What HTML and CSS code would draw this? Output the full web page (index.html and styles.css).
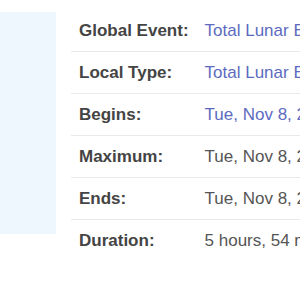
FILE: index.html
```html
<!DOCTYPE html>
<html lang="en">
<head>
  <meta charset="UTF-8">
  <title>Eclipse Details</title>
  <link rel="stylesheet" href="styles.css">
</head>
<body>

  <div class="page">
    <div class="side-panel"></div>

    <table class="event-table">
      <tr>
        <th>Global Event:</th>
        <td><a href="#">Total Lunar Eclipse</a></td>
      </tr>
      <tr>
        <th>Local Type:</th>
        <td><a href="#">Total Lunar Eclipse, visible in Example City</a></td>
      </tr>
      <tr>
        <th>Begins:</th>
        <td><a href="#">Tue, Nov 8, 2022 at 3:02 am</a></td>
      </tr>
      <tr>
        <th>Maximum:</th>
        <td>Tue, Nov 8, 2022 at 5:59 am</td>
      </tr>
      <tr>
        <th>Ends:</th>
        <td>Tue, Nov 8, 2022 at 8:56 am</td>
      </tr>
      <tr>
        <th>Duration:</th>
        <td>5 hours, 54 minutes</td>
      </tr>
    </table>
  </div>

</body>
</html>
```

FILE: styles.css
```css
* {
  margin: 0;
  padding: 0;
  box-sizing: border-box;
}

body {
  background: #fff;
  font-family: 'Liberation Sans', Arial, sans-serif;
  overflow: hidden;
}

.page {
  display: flex;
  align-items: flex-start;
  padding-top: 10px;
}

.side-panel {
  flex: 0 0 56px;
  height: 222px;
  margin-top: 2px;
  background: #eef6fe;
}

.event-table {
  flex: 0 0 auto;
  margin-left: 15px;
  border-collapse: collapse;
  font-size: 17px;
  line-height: 23px;
}

.event-table th,
.event-table td {
  padding: 9px 8px;
  text-align: left;
  white-space: nowrap;
  border-bottom: 1px solid #e9e9e9;
}

.event-table tr:last-child th,
.event-table tr:last-child td {
  border-bottom: none;
}

.event-table th {
  color: #444;
  font-weight: bold;
}

.event-table td {
  color: #555;
  width: 100%;
}

.event-table a {
  color: #5c6bc0;
  text-decoration: none;
}
```
